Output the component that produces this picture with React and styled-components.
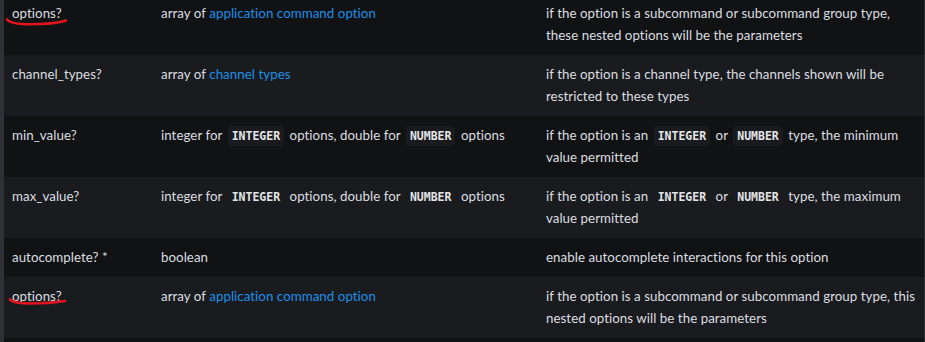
import React from "react";
import styled, { createGlobalStyle } from "styled-components";

const Global = createGlobalStyle`
  html, body { margin: 0; padding: 0; background: #111214; overflow: hidden; }
  body { font-family: "Lato", "Noto Sans", sans-serif; }
`;

const Page = styled.div`
  display: flex;
  width: 925px;
  height: 342px;
  overflow: hidden;
  background: #111214;
`;

const Strip = styled.div`
  width: 4px;
  flex: none;
  background: #2f3136;
`;

const Table = styled.div`
  flex: 1;
  margin-top: -6px;
  border-right: 1px solid #2b2d31;
  display: flex;
  flex-direction: column;
`;

const Row = styled.div`
  display: grid;
  grid-template-columns: 149px 385px 1fr;
  background: ${(p) => (p.$alt ? "#1a1b1e" : "#111214")};
  padding: 8px 0 9px;
  flex: none;
`;

const Cell = styled.div`
  position: relative;
  padding: 0 8px;
  color: #dbdee1;
  font-size: 13.3px;
  letter-spacing: 0.05px;
  line-height: 22px;
`;

const Link = styled.span`
  color: #1e8fe8;
`;

const Code = styled.code`
  display: inline-block;
  font-family: "DejaVu Sans Mono", "Liberation Mono", monospace;
  font-weight: bold;
  font-size: 11.5px;
  letter-spacing: 0;
  line-height: 16px;
  padding: 2px 4px;
  margin: 0 2px;
  border-radius: 4px;
  background: #1a1b1e;
  color: #e3e5e8;
`;

const Mark = styled.svg`
  position: absolute;
  left: 0;
  top: 0;
  width: 80px;
  height: 40px;
  pointer-events: none;
  overflow: visible;
`;

const Scribble = ({ d }) => (
  <Mark viewBox="0 0 80 40">
    <path d={d} fill="none" stroke="#e3141d" strokeWidth="2.6" strokeLinecap="round" />
  </Mark>
);

const rows = [
  {
    name: "options?",
    mark: "M3 17.5 C 6 21, 12 22.2, 25 22.3 C 40 22.3, 52 21.5, 62 18.5",
    type: <>array of <Link>application command option</Link></>,
    desc: "if the option is a subcommand or subcommand group type, these nested options will be the parameters",
  },
  {
    name: "channel_types?",
    type: <>array of <Link>channel types</Link></>,
    desc: "if the option is a channel type, the channels shown will be restricted to these types",
  },
  {
    name: "min_value?",
    type: <>integer for <Code>INTEGER</Code> options, double for <Code>NUMBER</Code> options</>,
    desc: <>if the option is an <Code>INTEGER</Code> or <Code>NUMBER</Code> type, the minimum value permitted</>,
  },
  {
    name: "max_value?",
    type: <>integer for <Code>INTEGER</Code> options, double for <Code>NUMBER</Code> options</>,
    desc: <>if the option is an <Code>INTEGER</Code> or <Code>NUMBER</Code> type, the maximum value permitted</>,
  },
  {
    name: "autocomplete? *",
    type: "boolean",
    desc: "enable autocomplete interactions for this option",
  },
  {
    name: "options?",
    mark: "M6 14.5 C 9 17.5, 16 18.5, 26 18.5 C 40 18.5, 52 17.5, 61 16",
    type: <>array of <Link>application command option</Link></>,
    desc: "if the option is a subcommand or subcommand group type, this nested options will be the parameters",
  },
  { name: "", type: "", desc: "" },
];

export default function App() {
  return (
    <>
      <Global />
      <Page>
        <Strip />
        <Table>
          {rows.map((r, i) => (
            <Row key={i} $alt={i % 2 === 1}>
              <Cell>
                {r.name}
                {r.mark && <Scribble d={r.mark} />}
              </Cell>
              <Cell>{r.type}</Cell>
              <Cell>{r.desc}</Cell>
            </Row>
          ))}
        </Table>
      </Page>
    </>
  );
}
